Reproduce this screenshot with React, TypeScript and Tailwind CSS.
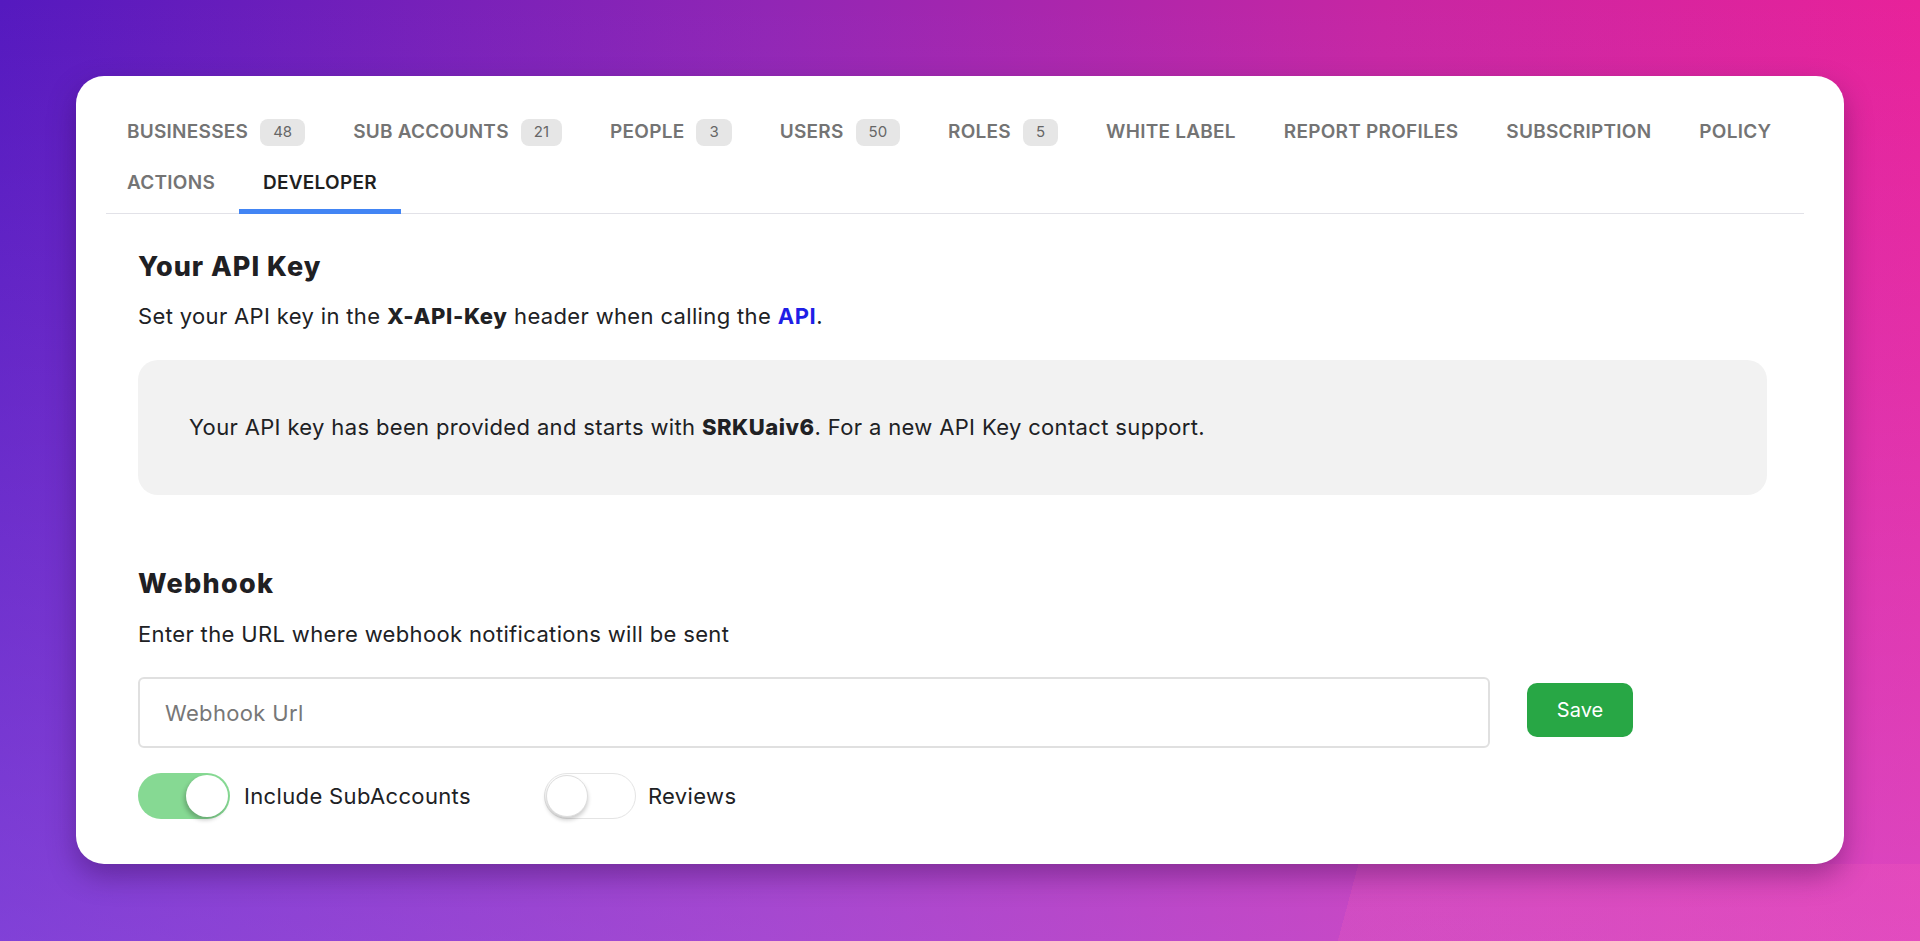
import { useState } from "react";

const tabs = [
    { label: "Businesses", count: 48 },
    { label: "Sub Accounts", count: 21 },
    { label: "People", count: 3 },
    { label: "Users", count: 50 },
    { label: "Roles", count: 5 },
    { label: "White Label" },
    { label: "Report Profiles" },
    { label: "Subscription" },
    { label: "Policy" },
    { label: "Actions" },
    { label: "Developer" },
];

function Toggle({ on, onClick }: { on: boolean; onClick: () => void }) {
    if (on) {
        return (
            <button onClick={onClick} className="relative h-[46px] w-[92px] shrink-0 rounded-full bg-[#86d993]">
                <span className="absolute right-[2px] top-[2px] h-[42px] w-[42px] rounded-full bg-white shadow-[-2px_3px_4px_rgba(0,0,0,0.22)]" />
            </button>
        );
    }
    return (
        <button onClick={onClick} className="relative h-[46px] w-[92px] shrink-0 rounded-full border border-[#e4e4e4] bg-white">
            <span className="absolute left-[1px] top-[1px] h-[42px] w-[42px] rounded-full border border-[#dedede] bg-white shadow-[0_3px_4px_rgba(0,0,0,0.2)]" />
        </button>
    );
}

export default function App() {
    const [active, setActive] = useState("Developer");
    const [subAccounts, setSubAccounts] = useState(true);
    const [reviews, setReviews] = useState(false);

    return (
        <div className="min-h-screen w-full bg-[linear-gradient(105deg,rgba(0,0,0,0)_70%,rgba(255,95,185,0.2)_70%),linear-gradient(to_bottom,rgba(200,130,255,0)_0%,rgba(200,130,255,0.38)_100%),linear-gradient(90deg,#5519bf_0%,#9126b5_40%,#c726a3_72%,#e8229a_100%)] bg-no-repeat px-[76px] pt-[76px] font-['Inter',sans-serif] text-[#202124] [background-position:bottom,center,center] [background-size:100%_77px,100%_100%,100%_100%]">
            <div className="rounded-[28px] bg-white pb-[45px] pl-[30px] pr-[40px] pt-[30px] shadow-[0_12px_28px_rgba(40,0,60,0.35)]">
                {/* Tabs */}
                <div className="border-b border-[#e2e2e8] pb-[5px]">
                    <div className="-ml-[3px] flex flex-wrap">
                        {tabs.map((tab, i) => (
                            <>
                                <button
                                    key={tab.label}
                                    onClick={() => setActive(tab.label)}
                                    className={`relative flex h-[51px] items-center px-6 pt-[2px] text-[19px] font-semibold uppercase tracking-[0.25px] ${active === tab.label ? "text-[#1f1f1f]" : "text-[#747474]"}`}
                                >
                                    {tab.label}
                                    {tab.count !== undefined && (
                                        <span className="ml-3 flex h-[27px] items-center rounded-lg bg-[#e6e6e6] px-[13px] text-[15px] font-normal tracking-normal text-[#666666]">
                                            {tab.count}
                                        </span>
                                    )}
                                    {active === tab.label && <span className="absolute -bottom-[6px] left-0 right-0 h-[5px] bg-[#4285f4]" />}
                                </button>
                                {i === 8 && <div className="h-0 basis-full" />}
                            </>
                        ))}
                    </div>
                </div>

                {/* API key */}
                <div className="pl-8 pr-[37px] text-[22px] tracking-[0.35px]">
                    <h2 className="mt-9 text-[27px] font-extrabold leading-[34px] tracking-[1px] text-[#1f2023]">Your API Key</h2>
                    <p className="mt-[17px] leading-[30px]">
                        Set your API key in the <b className="font-extrabold tracking-[0.6px]">X-API-Key</b> header when calling the{" "}
                        <a href="#" className="font-bold tracking-[0.6px] text-[#1f1fe6]">API</a>.
                    </p>
                    <div className="mt-[29px] flex h-[135px] items-center rounded-[20px] bg-[#f2f2f2] px-[51px]">
                        <p>
                            Your API key has been provided and starts with <b className="font-extrabold tracking-[0.5px]">SRKUaiv6</b>. For a new API Key contact support.
                        </p>
                    </div>

                    {/* Webhook */}
                    <h2 className="mt-[72px] text-[27px] font-extrabold leading-[34px] tracking-[1.3px] text-[#1f2023]">Webhook</h2>
                    <p className="mt-[18px] leading-[30px]">Enter the URL where webhook notifications will be sent</p>
                    <div className="mt-[28px] flex items-start">
                        <input
                            type="text"
                            placeholder="Webhook Url"
                            className="h-[71px] w-[1352px] rounded-md border-2 border-[#e0e0e0] px-[25px] text-[22px] tracking-[0.35px] outline-none placeholder:text-[#777777]"
                        />
                        <button className="ml-[37px] mt-[6px] h-[54px] w-[106px] rounded-[10px] bg-[#28a745] text-[20px] tracking-normal text-white">Save</button>
                    </div>
                    <div className="mt-[25px] flex items-center gap-[73px]">
                        <div className="flex items-center gap-[14px]">
                            <Toggle on={subAccounts} onClick={() => setSubAccounts(!subAccounts)} />
                            <span>Include SubAccounts</span>
                        </div>
                        <div className="flex items-center gap-[12px]">
                            <Toggle on={reviews} onClick={() => setReviews(!reviews)} />
                            <span>Reviews</span>
                        </div>
                    </div>
                </div>
            </div>
        </div>
    );
}
